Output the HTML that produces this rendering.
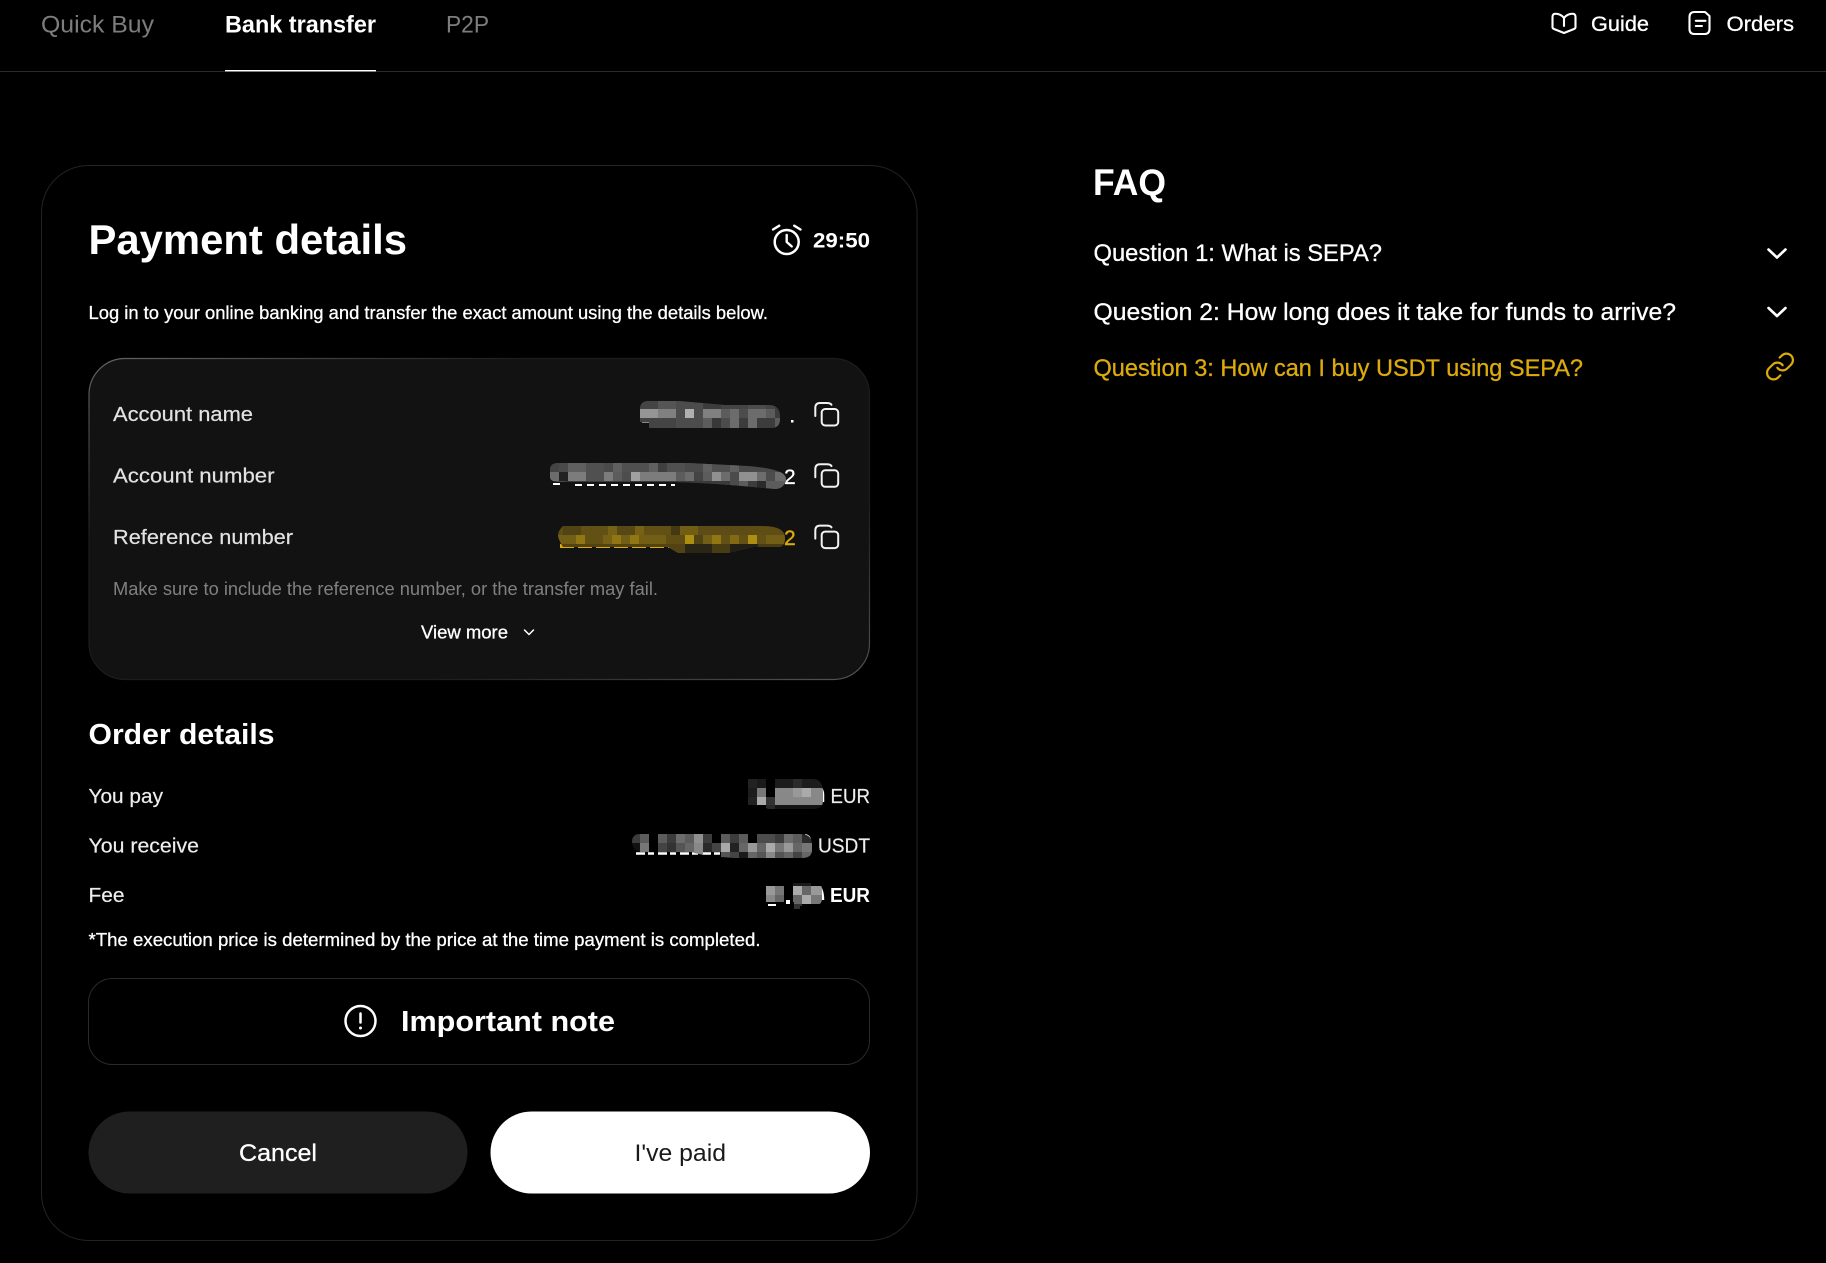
<!DOCTYPE html>
<html lang="en"><head><meta charset="utf-8"><title>Payment details</title>
<style>
html,body{margin:0;padding:0;background:#000;width:1826px;height:1263px;overflow:hidden}
svg{display:block}
text{font-family:"Liberation Sans",sans-serif;fill:#fff}
.m{stroke:#fff;stroke-width:.3}
.b{font-weight:700}
.l{fill:#e2e2e2;stroke:#e2e2e2;stroke-width:.2}
.ic{fill:none;stroke:#fff;stroke-width:2.1;stroke-linecap:round;stroke-linejoin:round}
</style></head><body>
<svg width="1826" height="1263" viewBox="0 0 1826 1263" xmlns="http://www.w3.org/2000/svg">
<defs>
<linearGradient id="bd" x1="0" y1="0" x2="1" y2="1"><stop offset="0" stop-color="#666"/><stop offset=".28" stop-color="#1c1c1c"/><stop offset=".72" stop-color="#1c1c1c"/><stop offset="1" stop-color="#555"/></linearGradient>
<clipPath id="c1"><path d="M640 409q0-8 9-8h30l45 4h45q11 0 11 12v2q0 9-9 9l-30 3h-45l-20-3h-27v-6h-9z"/></clipPath>
<clipPath id="c2"><path d="M550 470q0-7 8-7h130l60 3q25 2 34 7 6 4 3 10-3 6-10 6-60-6-100-7H560q-10 0-10-5z"/></clipPath>
<clipPath id="c3"><path d="M563 526h200q22 0 22 12 0 9-7 9h-25l-25 6h-50l-10-6H563q-5-8-5-12t5-9z"/></clipPath>
<clipPath id="c4"><path d="M748 779h65q10 0 10 14v8q0 8-10 8h-45l-8-4h-12v-8h-5v-14q0-4 5-4z"/></clipPath>
<clipPath id="c5"><path d="M640 834h160q12 0 12 10v6q0 8-10 8h-48l-20 0-25-2-20-4H640q-8-2-8-10 0-8 8-8z"/></clipPath>
<clipPath id="c6"><path d="M770 883h47q5 0 5 8v8q0 6-8 7h-14v3h-6v-7h-28q-4 0-4-4v-11q0-4 8-4z"/></clipPath>
</defs>
<rect width="1826" height="1263" fill="#000"/>

<!-- nav -->
<text x="41" y="32.500" font-size="24" style="fill:#7d7d7d" textLength="113" lengthAdjust="spacingAndGlyphs">Quick Buy</text>
<text x="225" y="32.500" font-size="24" class="b" textLength="151" lengthAdjust="spacingAndGlyphs">Bank transfer</text>
<text x="446" y="32.500" font-size="24" style="fill:#7d7d7d" textLength="43" lengthAdjust="spacingAndGlyphs">P2P</text>
<rect x="0" y="71" width="1826" height="1" fill="#2b2b2b"/>
<rect x="225" y="70" width="151" height="1.4" fill="#fff"/>

<path class="ic" d="M1564 18C1562 15 1558 13.500 1555 13.800Q1552.500 14 1552.500 17V27Q1552.500 28.500 1554 29L1564 33L1574 29Q1575.500 28.500 1575.500 27V17Q1575.500 14 1573 13.800C1570 13.500 1566 15 1564 18ZM1564 18V26"/>
<text x="1591" y="31" font-size="21" class="m" textLength="58" lengthAdjust="spacingAndGlyphs">Guide</text>
<path class="ic" d="M1694.500 12H1705L1709.500 16V29Q1709.500 34 1704.500 34H1694.500Q1689.500 34 1689.500 29V17Q1689.500 12 1694.500 12ZM1695.800 20.800H1705.500M1695.800 26H1702"/>
<text x="1726.500" y="31" font-size="21" class="m" textLength="67.500" lengthAdjust="spacingAndGlyphs">Orders</text>

<!-- card -->
<rect x="41.500" y="165.500" width="875.500" height="1075" rx="47" fill="#000" stroke="#232323" stroke-width="1"/>
<text x="88.500" y="254" font-size="42" class="b" textLength="318.500" lengthAdjust="spacingAndGlyphs">Payment details</text>

<circle cx="786.700" cy="242" r="12" fill="none" stroke="#fff" stroke-width="2.500"/>
<path class="ic" style="stroke-width:2.400px" d="M773 229.500L779.300 225.700M794.200 225.700L800.500 229.500M786.700 235V242L791.700 246.400"/>
<text x="813" y="247.500" font-size="21" class="b" textLength="57" lengthAdjust="spacingAndGlyphs">29:50</text>

<text x="88.500" y="319" font-size="18.500" class="m" textLength="679.500" lengthAdjust="spacingAndGlyphs">Log in to your online banking and transfer the exact amount using the details below.</text>

<!-- bank box -->
<rect x="89" y="358.500" width="780.500" height="321" rx="36" fill="#121212" stroke="url(#bd)" stroke-width="1.200"/>
<text x="113" y="421" font-size="20.500" class="l" style="fill:#e2e2e2" textLength="140" lengthAdjust="spacingAndGlyphs">Account name</text>
<text x="113" y="482.500" font-size="20.500" class="l" style="fill:#e2e2e2" textLength="161.500" lengthAdjust="spacingAndGlyphs">Account number</text>
<text x="113" y="544" font-size="20.500" class="l" style="fill:#e2e2e2" textLength="180" lengthAdjust="spacingAndGlyphs">Reference number</text>

<!-- value fragments -->
<rect x="791" y="420" width="2.500" height="2.500" fill="#fff"/>
<path d="M642 421.500h10M553 484h12M575 485h100" stroke="#fff" stroke-width="2" stroke-dasharray="7 5" fill="none"/>
<text x="784" y="484" font-size="21" style="fill:#fff" class="m">2</text>
<text x="784" y="545" font-size="21" style="fill:#dcaa0c;stroke:#dcaa0c;stroke-width:.4">2</text>
<path d="M560 546h125" stroke="#dcaa0c" stroke-width="4" stroke-dasharray="14 4" fill="none"/>

<!-- mosaic 1 -->
<g clip-path="url(#c1)">
<rect x="640" y="400" width="150" height="28" fill="#444"/>
<rect x="640" y="400" width="18" height="9" fill="#444"/><rect x="658" y="400" width="18" height="9" fill="#555"/><rect x="676" y="400" width="27" height="9" fill="#4c4c4c"/><rect x="703" y="400" width="18" height="9" fill="#3c3c3c"/><rect x="721" y="400" width="27" height="9" fill="#444"/><rect x="748" y="400" width="18" height="9" fill="#4c4c4c"/><rect x="775" y="400" width="15" height="9" fill="#3c3c3c"/>
<rect x="640" y="409" width="18" height="9" fill="#959595"/><rect x="658" y="409" width="18" height="9" fill="#808080"/><rect x="676" y="409" width="9" height="9" fill="#4c4c4c"/><rect x="685" y="409" width="9" height="9" fill="#b0b0b0"/><rect x="694" y="409" width="9" height="9" fill="#4c4c4c"/><rect x="703" y="409" width="18" height="9" fill="#808080"/><rect x="721" y="409" width="9" height="9" fill="#5c5c5c"/><rect x="730" y="409" width="9" height="9" fill="#6c6c6c"/><rect x="739" y="409" width="9" height="9" fill="#4c4c4c"/><rect x="748" y="409" width="18" height="9" fill="#6c6c6c"/><rect x="766" y="409" width="9" height="9" fill="#5c5c5c"/><rect x="775" y="409" width="15" height="9" fill="#3c3c3c"/>
<rect x="676" y="418" width="27" height="10" fill="#4c4c4c"/><rect x="703" y="418" width="9" height="10" fill="#5c5c5c"/><rect x="712" y="418" width="9" height="10" fill="#383838"/><rect x="721" y="418" width="9" height="10" fill="#4c4c4c"/><rect x="730" y="418" width="9" height="10" fill="#6c6c6c"/><rect x="739" y="418" width="9" height="10" fill="#3c3c3c"/><rect x="748" y="418" width="9" height="10" fill="#6c6c6c"/><rect x="757" y="418" width="18" height="10" fill="#3c3c3c"/><rect x="775" y="418" width="15" height="10" fill="#5c5c5c"/>
</g>

<!-- mosaic 2 -->
<g clip-path="url(#c2)">
<rect x="550" y="463" width="240" height="27" fill="#4a4a4a"/>
<rect x="550" y="463" width="9" height="9" fill="#444"/><rect x="559" y="463" width="9" height="9" fill="#4a4a4a"/><rect x="568" y="463" width="18" height="9" fill="#606060"/><rect x="586" y="463" width="18" height="9" fill="#505050"/><rect x="604" y="463" width="9" height="9" fill="#4a4a4a"/><rect x="613" y="463" width="9" height="9" fill="#606060"/><rect x="622" y="463" width="27" height="9" fill="#505050"/><rect x="649" y="463" width="9" height="9" fill="#606060"/><rect x="658" y="463" width="9" height="9" fill="#404040"/><rect x="667" y="463" width="18" height="9" fill="#505050"/><rect x="685" y="463" width="18" height="9" fill="#4a4a4a"/><rect x="703" y="463" width="9" height="9" fill="#606060"/><rect x="712" y="463" width="18" height="9" fill="#505050"/><rect x="730" y="463" width="9" height="9" fill="#606060"/>
<rect x="550" y="472" width="9" height="9" fill="#6c6c6c"/><rect x="559" y="472" width="9" height="9" fill="#222"/><rect x="568" y="472" width="18" height="9" fill="#7c7c7c"/><rect x="586" y="472" width="18" height="9" fill="#505050"/><rect x="604" y="472" width="9" height="9" fill="#7c7c7c"/><rect x="613" y="472" width="9" height="9" fill="#5c5c5c"/><rect x="622" y="472" width="9" height="9" fill="#4c4c4c"/><rect x="631" y="472" width="9" height="9" fill="#a0a0a0"/><rect x="640" y="472" width="36" height="9" fill="#7c7c7c"/><rect x="676" y="472" width="9" height="9" fill="#5c5c5c"/><rect x="685" y="472" width="9" height="9" fill="#6c6c6c"/><rect x="694" y="472" width="9" height="9" fill="#444"/><rect x="703" y="472" width="9" height="9" fill="#5c5c5c"/><rect x="712" y="472" width="9" height="9" fill="#909090"/><rect x="721" y="472" width="9" height="9" fill="#6c6c6c"/><rect x="730" y="472" width="9" height="9" fill="#4c4c4c"/><rect x="739" y="472" width="18" height="9" fill="#909090"/><rect x="757" y="472" width="9" height="9" fill="#6c6c6c"/><rect x="766" y="472" width="9" height="9" fill="#4c4c4c"/><rect x="775" y="472" width="15" height="9" fill="#6c6c6c"/>
<rect x="565" y="481" width="165" height="9" fill="#3a3a3a"/><rect x="730" y="481" width="9" height="9" fill="#4c4c4c"/><rect x="739" y="481" width="9" height="9" fill="#5c5c5c"/><rect x="748" y="481" width="9" height="9" fill="#3c3c3c"/><rect x="757" y="481" width="9" height="9" fill="#2a2a2a"/><rect x="766" y="481" width="24" height="9" fill="#5c5c5c"/>
</g>

<!-- mosaic 3 -->
<g clip-path="url(#c3)">
<rect x="558" y="526" width="232" height="27" fill="#5f4e13"/>
<rect x="563" y="526" width="18" height="9" fill="#524315"/><rect x="581" y="526" width="27" height="9" fill="#625014"/><rect x="608" y="526" width="9" height="9" fill="#776114"/><rect x="617" y="526" width="18" height="9" fill="#574816"/><rect x="635" y="526" width="9" height="9" fill="#776114"/><rect x="644" y="526" width="27" height="9" fill="#625014"/><rect x="671" y="526" width="9" height="9" fill="#453914"/><rect x="680" y="526" width="18" height="9" fill="#725d14"/><rect x="698" y="526" width="54" height="9" fill="#5d4c15"/>
<rect x="558" y="535" width="18" height="9" fill="#735e16"/><rect x="576" y="535" width="9" height="9" fill="#917613"/><rect x="585" y="535" width="18" height="9" fill="#625014"/><rect x="603" y="535" width="9" height="9" fill="#776114"/><rect x="612" y="535" width="9" height="9" fill="#917613"/><rect x="621" y="535" width="9" height="9" fill="#735e16"/><rect x="630" y="535" width="9" height="9" fill="#917613"/><rect x="639" y="535" width="27" height="9" fill="#735e16"/><rect x="685" y="535" width="9" height="9" fill="#ae8e10"/><rect x="694" y="535" width="9" height="9" fill="#524315"/><rect x="703" y="535" width="9" height="9" fill="#735e16"/><rect x="712" y="535" width="9" height="9" fill="#917613"/><rect x="721" y="535" width="9" height="9" fill="#625014"/><rect x="730" y="535" width="9" height="9" fill="#816a13"/><rect x="739" y="535" width="9" height="9" fill="#625014"/><rect x="748" y="535" width="9" height="9" fill="#ae8e10"/><rect x="757" y="535" width="9" height="9" fill="#625014"/><rect x="766" y="535" width="24" height="9" fill="#735e16"/>
<rect x="558" y="544" width="127" height="9" fill="#524315"/>
<rect x="685" y="544" width="27" height="9" fill="#2a2515"/><rect x="712" y="544" width="18" height="9" fill="#4a3c12"/><rect x="730" y="544" width="28" height="9" fill="#231f14"/><rect x="758" y="544" width="32" height="9" fill="#4a3c12"/>
</g>

<!-- copy icons -->
<g fill="none" stroke="#f2f2f2" stroke-width="2" stroke-linecap="round" stroke-linejoin="round">
<path d="M815.300 416V408Q815.300 403 820 403H827Q830.500 403 831.500 404.800"/><rect x="821.700" y="409" width="16.500" height="16.500" rx="3.500"/>
<path d="M815.300 477.300V469.300Q815.300 464.300 820 464.300H827Q830.500 464.300 831.500 466.100"/><rect x="821.700" y="470.300" width="16.500" height="16.500" rx="3.500"/>
<path d="M815.300 538.600V530.600Q815.300 525.600 820 525.600H827Q830.500 525.600 831.500 527.400"/><rect x="821.700" y="531.600" width="16.500" height="16.500" rx="3.500"/>
</g>

<text x="113" y="595" font-size="18" style="fill:#808080" textLength="545" lengthAdjust="spacingAndGlyphs">Make sure to include the reference number, or the transfer may fail.</text>
<text x="421" y="638.500" font-size="18.500" class="m" textLength="87" lengthAdjust="spacingAndGlyphs">View more</text>
<path d="M524.500 630L529 634.500L533.500 630" fill="none" stroke="#fff" stroke-width="1.500" stroke-linecap="round" stroke-linejoin="round"/>

<!-- order details -->
<text x="88.500" y="744" font-size="29" class="b" textLength="186" lengthAdjust="spacingAndGlyphs">Order details</text>
<text x="88.500" y="803" font-size="20.500" class="l" style="fill:#eee" textLength="74.500" lengthAdjust="spacingAndGlyphs">You pay</text>
<text x="88.500" y="852.500" font-size="20.500" class="l" style="fill:#eee" textLength="110.500" lengthAdjust="spacingAndGlyphs">You receive</text>
<text x="88.500" y="902" font-size="20.500" class="l" style="fill:#eee" textLength="36" lengthAdjust="spacingAndGlyphs">Fee</text>
<text x="830.500" y="803" font-size="20.500" class="l" style="fill:#eee" textLength="39.500" lengthAdjust="spacingAndGlyphs">EUR</text>
<text x="818" y="852.500" font-size="20.500" class="l" style="fill:#eee" textLength="52" lengthAdjust="spacingAndGlyphs">USDT</text>
<text x="830" y="902" font-size="20.500" class="b" textLength="40" lengthAdjust="spacingAndGlyphs">EUR</text>

<!-- order fragments -->
<path d="M815 786Q823 787 823 795V802" fill="none" stroke="#fff" stroke-width="2.500"/>
<rect x="752" y="802" width="8" height="3" fill="#fff"/>
<path d="M805 835Q810 836 810 840" fill="none" stroke="#fff" stroke-width="2"/>
<path d="M636 853.500h85" stroke="#fff" stroke-width="2.500" stroke-dasharray="9 3 6 4" fill="none"/>
<path d="M820 887Q823 892 823 900" fill="none" stroke="#fff" stroke-width="2.500"/>
<rect x="786" y="900" width="4" height="4" fill="#fff"/><rect x="768" y="904" width="8" height="2" fill="#fff"/>

<g clip-path="url(#c4)">
<rect x="748" y="779" width="9" height="9" fill="#222"/><rect x="757" y="779" width="9" height="9" fill="#1a1a1a"/><rect x="775" y="779" width="18" height="9" fill="#1c1c1c"/><rect x="793" y="779" width="9" height="9" fill="#2a2a2a"/><rect x="802" y="779" width="21" height="9" fill="#1c1c1c"/>
<rect x="748" y="788" width="9" height="9" fill="#1c1c1c"/><rect x="757" y="788" width="9" height="9" fill="#777"/><rect x="775" y="788" width="18" height="9" fill="#888"/><rect x="793" y="788" width="9" height="9" fill="#999"/><rect x="802" y="788" width="9" height="9" fill="#aaa"/><rect x="811" y="788" width="12" height="9" fill="#888"/>
<rect x="748" y="797" width="9" height="8" fill="#222"/><rect x="757" y="797" width="9" height="8" fill="#aaa"/><rect x="766" y="797" width="9" height="8" fill="#333"/><rect x="775" y="797" width="48" height="8" fill="#888"/>
<rect x="766" y="805" width="9" height="5" fill="#2a2a2a"/><rect x="775" y="805" width="48" height="5" fill="#141414"/>
</g>

<g clip-path="url(#c5)">
<rect x="631" y="834" width="9" height="9" fill="#3c3c3c"/><rect x="640" y="834" width="9" height="9" fill="#5c5c5c"/><rect x="658" y="834" width="9" height="9" fill="#5c5c5c"/><rect x="667" y="834" width="9" height="9" fill="#3c3c3c"/><rect x="676" y="834" width="9" height="9" fill="#6c6c6c"/><rect x="685" y="834" width="9" height="9" fill="#5c5c5c"/><rect x="694" y="834" width="9" height="9" fill="#909090"/><rect x="703" y="834" width="9" height="9" fill="#3c3c3c"/><rect x="721" y="834" width="9" height="9" fill="#5c5c5c"/><rect x="730" y="834" width="9" height="9" fill="#3c3c3c"/><rect x="739" y="834" width="9" height="9" fill="#5c5c5c"/><rect x="757" y="834" width="9" height="9" fill="#4c4c4c"/><rect x="766" y="834" width="9" height="9" fill="#4c4c4c"/><rect x="775" y="834" width="9" height="9" fill="#3c3c3c"/><rect x="784" y="834" width="9" height="9" fill="#6c6c6c"/><rect x="793" y="834" width="9" height="9" fill="#5c5c5c"/><rect x="802" y="834" width="10" height="9" fill="#2a2a2a"/>
<rect x="631" y="843" width="9" height="9" fill="#111"/><rect x="640" y="843" width="9" height="9" fill="#777"/><rect x="658" y="843" width="9" height="9" fill="#444"/><rect x="667" y="843" width="9" height="9" fill="#333"/><rect x="676" y="843" width="9" height="9" fill="#555"/><rect x="685" y="843" width="9" height="9" fill="#666"/><rect x="694" y="843" width="9" height="9" fill="#888"/><rect x="703" y="843" width="9" height="9" fill="#2a2a2a"/><rect x="712" y="843" width="9" height="9" fill="#444"/><rect x="721" y="843" width="9" height="9" fill="#aaa"/><rect x="730" y="843" width="9" height="9" fill="#222"/><rect x="739" y="843" width="9" height="9" fill="#666"/><rect x="748" y="843" width="9" height="9" fill="#999"/><rect x="757" y="843" width="9" height="9" fill="#666"/><rect x="766" y="843" width="9" height="9" fill="#aaa"/><rect x="775" y="843" width="9" height="9" fill="#777"/><rect x="784" y="843" width="9" height="9" fill="#999"/><rect x="793" y="843" width="9" height="9" fill="#666"/><rect x="802" y="843" width="10" height="9" fill="#777"/>
<rect x="694" y="852" width="9" height="6" fill="#888"/><rect x="721" y="852" width="9" height="6" fill="#555"/><rect x="730" y="852" width="9" height="6" fill="#444"/><rect x="739" y="852" width="9" height="6" fill="#1a1a1a"/><rect x="748" y="852" width="9" height="6" fill="#666"/><rect x="757" y="852" width="9" height="6" fill="#555"/><rect x="766" y="852" width="9" height="6" fill="#888"/><rect x="775" y="852" width="9" height="6" fill="#555"/><rect x="784" y="852" width="9" height="6" fill="#666"/><rect x="793" y="852" width="9" height="6" fill="#444"/><rect x="802" y="852" width="10" height="6" fill="#666"/>
</g>

<g clip-path="url(#c6)">
<rect x="766" y="886" width="9" height="9" fill="#999"/><rect x="775" y="886" width="9" height="9" fill="#777"/><rect x="793" y="886" width="9" height="9" fill="#aaa"/><rect x="802" y="886" width="9" height="9" fill="#666"/><rect x="811" y="886" width="11" height="9" fill="#999"/>
<rect x="766" y="895" width="9" height="9" fill="#888"/><rect x="775" y="895" width="9" height="9" fill="#666"/><rect x="793" y="895" width="9" height="9" fill="#666"/><rect x="802" y="895" width="9" height="9" fill="#aaa"/><rect x="811" y="895" width="11" height="9" fill="#777"/>
<rect x="793" y="904" width="9" height="5" fill="#333"/><rect x="793" y="883" width="18" height="3" fill="#1a1a1a"/>
</g>

<text x="88.500" y="946" font-size="18.500" class="m" textLength="672" lengthAdjust="spacingAndGlyphs">*The execution price is determined by the price at the time payment is completed.</text>

<!-- note -->
<rect x="88.500" y="978.500" width="781" height="86" rx="24" fill="#000" stroke="#2a2a2a" stroke-width="1"/>
<circle cx="360.500" cy="1021" r="15" fill="none" stroke="#fff" stroke-width="2.500"/>
<path d="M360.500 1013.500V1022.500" stroke="#fff" stroke-width="2.500" stroke-linecap="round"/><circle cx="360.500" cy="1028" r="1.500" fill="#fff"/>
<text x="401" y="1031" font-size="29" class="b" textLength="214" lengthAdjust="spacingAndGlyphs">Important note</text>

<!-- buttons -->
<rect x="88.500" y="1111.500" width="379" height="82" rx="41" fill="#1f1f1f"/>
<text x="239" y="1161" font-size="24.500" class="m" textLength="78" lengthAdjust="spacingAndGlyphs">Cancel</text>
<rect x="490.500" y="1111.500" width="379.500" height="82" rx="41" fill="#fff"/>
<text x="634.500" y="1161" font-size="24.500" style="fill:#1a1a1a" textLength="91.500" lengthAdjust="spacingAndGlyphs">I've paid</text>

<!-- FAQ -->
<text x="1093" y="195" font-size="37" class="b" textLength="73" lengthAdjust="spacingAndGlyphs">FAQ</text>
<text x="1093.500" y="261" font-size="24.500" class="m" textLength="288.500" lengthAdjust="spacingAndGlyphs">Question 1: What is SEPA?</text>
<text x="1093.500" y="320" font-size="24.500" class="m" textLength="582.500" lengthAdjust="spacingAndGlyphs">Question 2: How long does it take for funds to arrive?</text>
<text x="1093.500" y="376" font-size="24.500" style="fill:#dcaa0c;stroke:#dcaa0c;stroke-width:.3" textLength="489.500" lengthAdjust="spacingAndGlyphs">Question 3: How can I buy USDT using SEPA?</text>
<path d="M1768.500 249.500L1777 257.500L1785.500 249.500M1768.500 308L1777 316L1785.500 308" fill="none" stroke="#fff" stroke-width="2.600" stroke-linecap="round" stroke-linejoin="round"/>
<g transform="translate(1764.400 350.900) scale(1.300)" fill="none" stroke="#dcaa0c" stroke-width="1.700" stroke-linecap="round" stroke-linejoin="round">
<path d="M10 13a5 5 0 0 0 7.540.540l3-3a5 5 0 0 0-7.070-7.070l-1.720 1.710"/>
<path d="M14 11a5 5 0 0 0-7.540-.540l-3 3a5 5 0 0 0 7.070 7.070l1.710-1.710"/>
</g>
</svg>
</body></html>
